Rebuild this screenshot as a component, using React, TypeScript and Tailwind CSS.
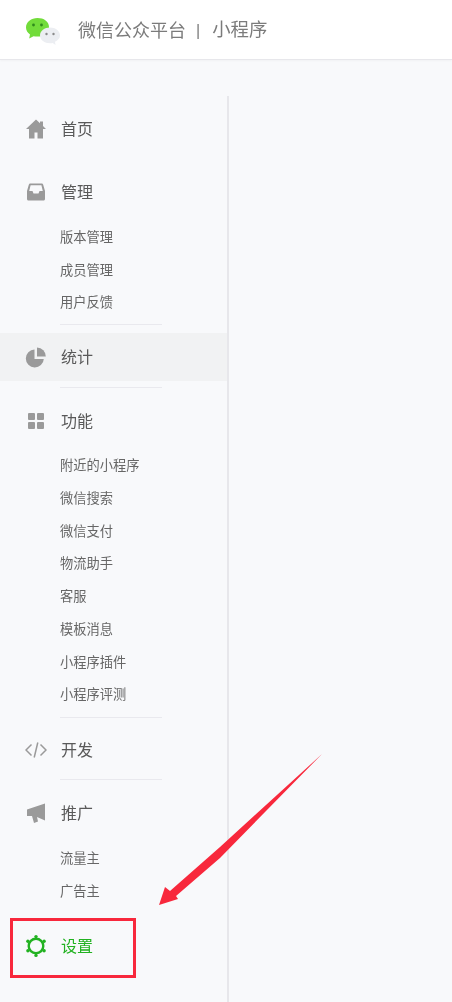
import type { ReactNode } from "react";

const FONT = "font-['Liberation_Sans','Noto_Sans_CJK_SC',sans-serif]";

function MainRow({ icon, label, active }: { icon: ReactNode; label: string; active?: boolean }) {
  return (
    <div className={`flex h-[48px] items-center pl-[24px] ${active ? "text-[#22b221]" : "text-[#595959]"}`}>
      <div className="flex h-[24px] w-[24px] items-center justify-center">{icon}</div>
      <span className="ml-[13px] mt-[2px] text-[16px] leading-none">{label}</span>
    </div>
  );
}

function SubList({ items, className }: { items: string[]; className: string }) {
  return (
    <div className={`flex flex-col ${className}`}>
      {items.map((item) => (
        <div key={item} className="flex h-[32.75px] items-center pl-[60px] text-[13.25px] leading-none text-[#666666]">
          {item}
        </div>
      ))}
    </div>
  );
}

function Divider({ className }: { className: string }) {
  return <div className={`ml-[60px] h-px w-[102px] bg-[#e9e9ee] ${className}`} />;
}

const iconCls = "h-[22px] w-[22px] fill-[#9a9a9a]";

const HomeIcon = () => (
  <svg viewBox="0 0 22 22" className={iconCls}>
    <path d="M11 1.500 1 11h3v9.500h5.500v-6h3v6H18V11h3l-3-2.900V3.500h-3v1.800z" />
  </svg>
);

const InboxIcon = () => (
  <svg viewBox="0 0 22 22" className={iconCls}>
    <path
      fillRule="evenodd"
      d="M5.500 2.500h11c.9 0 1.400.4 1.700 1.200L20 10v8c0 .9-.6 1.500-1.500 1.500h-15C2.600 19.500 2 18.900 2 18v-8l1.800-6.300C4.100 2.900 4.600 2.500 5.500 2.500zM5.600 4.200 4.200 10H7.500l1 2.500h5l1-2.500h3.300l-1.400-5.800z"
    />
  </svg>
);

const PieIcon = () => (
  <svg viewBox="0 0 22 22" className={iconCls}>
    <path d="M9.500 3.500v9.500h9.300A9 9 0 1 1 9.500 3.500z" />
    <path d="M12 1.500a8.800 8.800 0 0 1 8.800 9H12z" />
  </svg>
);

const GridIcon = () => (
  <svg viewBox="0 0 22 22" className={iconCls}>
    <rect x="3" y="3" width="7" height="7" rx="1" />
    <rect x="12" y="3" width="7" height="7" rx="1" />
    <rect x="3" y="12" width="7" height="7" rx="1" />
    <rect x="12" y="12" width="7" height="7" rx="1" />
  </svg>
);

const CodeIcon = () => (
  <svg viewBox="0 0 22 22" className="h-[22px] w-[22px] fill-none stroke-[#9a9a9a] stroke-[1.500]">
    <path d="M6.500 5.500 1 11l5.500 5.500M15.500 5.500 21 11l-5.500 5.500M12.800 3.500 9.200 18.500" />
  </svg>
);

const MegaphoneIcon = () => (
  <svg viewBox="0 0 22 22" className={iconCls}>
    <path d="M20 1.500V18.500L12 15 13 19.500 9 21 7 14H2V7.500z" />
  </svg>
);

const GearIcon = () => (
  <svg viewBox="0 0 24 24" className="h-[24px] w-[24px] fill-none stroke-[#22b221]">
    <circle cx="12" cy="12" r="7.300" strokeWidth="2.400" />
    <g className="fill-[#22b221]" stroke="none">
      <circle cx="12" cy="2.600" r="1.700" />
      <circle cx="12" cy="21.400" r="1.700" />
      <circle cx="3.900" cy="7.300" r="1.700" />
      <circle cx="20.100" cy="7.300" r="1.700" />
      <circle cx="3.900" cy="16.700" r="1.700" />
      <circle cx="20.100" cy="16.700" r="1.700" />
    </g>
  </svg>
);

const WechatLogo = () => (
  <svg viewBox="0 0 34 28" className="mt-[2px] h-[28px] w-[34px]">
    <path d="M11.500 1C5.200 1 0 5 0 10.500c0 2.800 1.600 5.300 4 7l-.8 4 4.300-2.300c1.300.3 2.600.4 4 .4 6.300 0 11.500-4 11.500-9.600S17.800 1 11.500 1z" fill="#72dc3a" />
    <circle cx="7.500" cy="8" r="1.400" fill="#2f8a1c" />
    <circle cx="15.500" cy="8" r="1.400" fill="#2f8a1c" />
    <path d="M24 10.500c-5.500 0-10 3.500-10 8s4.500 7.700 10 7.700c.9 0 1.800-.1 2.700-.3L29.500 28l-.5-3.300c3-1.400 5-3.500 5-6.200 0-4.500-4.500-8-10-8z" fill="#eceef2" />
    <circle cx="20.500" cy="17" r="1.200" fill="#8a8a8a" />
    <circle cx="27.500" cy="17" r="1.200" fill="#8a8a8a" />
  </svg>
);

export default function App() {
  return (
    <div className={`relative h-[1002px] w-[452px] overflow-hidden bg-[#f8f9fb] blur-[0.5px] ${FONT}`}>
      {/* Header */}
      <header className="flex h-[60px] items-center border-b border-[#e7e7eb] bg-white pl-[26px] shadow-[0_1px_2px_rgba(0,0,0,0.03)]">
        <WechatLogo />
        <div className="mt-[2px] flex items-center text-[#7b7b7b]">
          <span className="ml-[18px] text-[18px] leading-none">微信公众平台</span>
          <span className="ml-[10px] text-[16px] leading-none">|</span>
          <span className="ml-[12px] text-[18.4px] leading-none">小程序</span>
        </div>
      </header>

      {/* Sidebar */}
      <nav className="mt-[36px] h-[906px] w-[229px] border-r-2 border-[#e7e7eb] pt-[9px]">
        <MainRow icon={<HomeIcon />} label="首页" />
        <div className="mt-[15px]">
          <MainRow icon={<InboxIcon />} label="管理" />
        </div>
        <SubList items={["版本管理", "成员管理", "用户反馈"]} className="mt-[5px]" />
        <Divider className="mt-[5px]" />
        <div className="mt-[8px] bg-[#f1f2f3]">
          <MainRow icon={<PieIcon />} label="统计" />
        </div>
        <Divider className="mt-[6px]" />
        <div className="mt-[9px]">
          <MainRow icon={<GridIcon />} label="功能" />
        </div>
        <SubList items={["附近的小程序", "微信搜索", "微信支付", "物流助手", "客服", "模板消息", "小程序插件", "小程序评测"]} className="mt-[4px]" />
        <Divider className="mt-[6px]" />
        <div className="mt-[8px]">
          <MainRow icon={<CodeIcon />} label="开发" />
        </div>
        <Divider className="mt-[5px]" />
        <div className="mt-[9px]">
          <MainRow icon={<MegaphoneIcon />} label="推广" />
        </div>
        <SubList items={["流量主", "广告主"]} className="mt-[5px]" />
        <div className="mt-[14px]">
          <MainRow icon={<GearIcon />} label="设置" active />
        </div>
      </nav>

      {/* Annotation: red box and arrow */}
      <div className="absolute left-[10px] top-[918px] h-[60px] w-[126px] border-[3px] border-[#f8283c]" />
      <svg viewBox="0 0 452 1002" className="absolute left-0 top-0 h-[1002px] w-[452px]">
        <polygon points="322,754 220,858 176,896 178,899 159,905 165,887 170,891 220,847" fill="#f8283c" />
      </svg>
    </div>
  );
}
